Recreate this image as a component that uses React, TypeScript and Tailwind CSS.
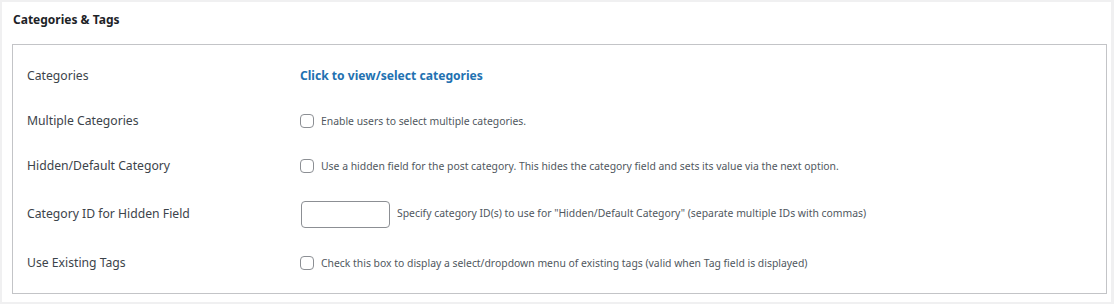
import type { ReactNode } from "react"

type RowProps = {
  label: string
  height: string
  children: ReactNode
}

function Row({ label, height, children }: RowProps) {
  return (
    <div className={`flex items-center ${height}`}>
      <div className="w-[287px] shrink-0 pl-[14px] text-[12.2px] text-[#3c434a]">
        {label}
      </div>
      <div className="flex items-center">{children}</div>
    </div>
  )
}

function Check({ text }: { text: string }) {
  return (
    <label className="flex items-center gap-[7px] text-[10.4px] text-[#50575e]">
      <span className="block h-[14px] w-[14px] rounded-[4px] border border-[#8c8f94] bg-white" />
      {text}
    </label>
  )
}

export default function App() {
  return (
    <div className="h-[304px] w-[1114px] bg-[#f0f0f1] pl-[2px] pt-[2px] font-['Noto_Sans',sans-serif]">
      <div className="h-[300px] w-[1109px] bg-white pl-[10px] pt-[9px]">
        <h2 className="pl-[1px] text-[12px] font-bold leading-[18px] text-[#1d2327]">
          Categories &amp; Tags
        </h2>
        <div className="mt-[15px] h-[250px] w-[1095px] border border-[#c3c4c7] pt-[9px]">
          <Row label="Categories" height="h-[45px]">
            <a className="cursor-pointer text-[12.1px] font-bold text-[#2271b1]">
              Click to view/select categories
            </a>
          </Row>
          <Row label="Multiple Categories" height="h-[45px]">
            <Check text="Enable users to select multiple categories." />
          </Row>
          <Row label="Hidden/Default Category" height="h-[45px]">
            <Check text="Use a hidden field for the post category. This hides the category field and sets its value via the next option." />
          </Row>
          <Row label="Category ID for Hidden Field" height="h-[50px]">
            <input
              type="text"
              className="ml-px h-[27px] w-[89px] rounded-[4px] border border-[#8c8f94] bg-white"
            />
            <span className="ml-[7px] text-[10.4px] text-[#50575e]">
              Specify category ID(s) to use for "Hidden/Default Category" (separate multiple IDs with commas)
            </span>
          </Row>
          <Row label="Use Existing Tags" height="h-[49px]">
            <Check text="Check this box to display a select/dropdown menu of existing tags (valid when Tag field is displayed)" />
          </Row>
        </div>
      </div>
    </div>
  )
}
